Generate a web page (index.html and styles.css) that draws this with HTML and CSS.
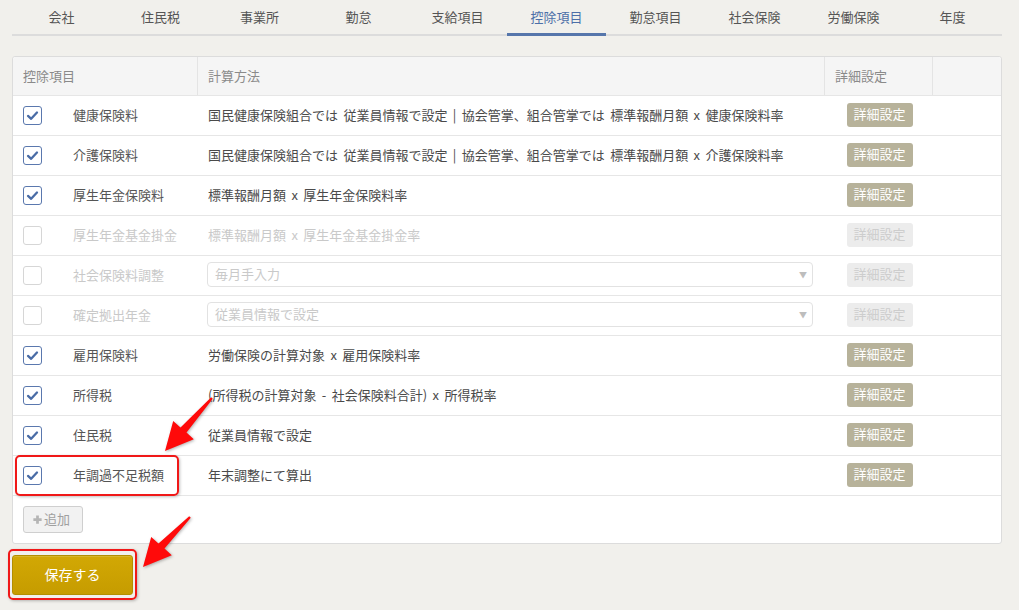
FILE: index.html
```html
<!DOCTYPE html>
<html lang="ja">
<head>
<meta charset="utf-8">
<title>控除項目</title>
<link rel="stylesheet" href="styles.css">
</head>
<body>
<div class="page">
  <nav class="tabs">
    <div class="tab">会社</div>
    <div class="tab">住民税</div>
    <div class="tab">事業所</div>
    <div class="tab">勤怠</div>
    <div class="tab">支給項目</div>
    <div class="tab active">控除項目</div>
    <div class="tab">勤怠項目</div>
    <div class="tab">社会保険</div>
    <div class="tab">労働保険</div>
    <div class="tab">年度</div>
  </nav>

  <div class="panel">
    <div class="row head">
      <div class="cell c1"><span class="txt">控除項目</span></div>
      <div class="cell c2"><span class="txt">計算方法</span></div>
      <div class="cell c3"><span class="txt">詳細設定</span></div>
      <div class="cell c4"></div>
    </div>

    <div class="row">
      <div class="cell c1"><span class="cb on"><svg viewBox="0 0 19 19"><path d="M4.5 10 L8 13.2 L14.5 6.2"/></svg></span><span class="label">健康保険料</span></div>
      <div class="cell c2"><span class="txt">国民健康保険組合では 従業員情報で設定 | 協会管掌、組合管掌では 標準報酬月額 x 健康保険料率</span></div>
      <div class="cell c3"><span class="btn">詳細設定</span></div>
      <div class="cell c4"></div>
    </div>
    <div class="row">
      <div class="cell c1"><span class="cb on"><svg viewBox="0 0 19 19"><path d="M4.5 10 L8 13.2 L14.5 6.2"/></svg></span><span class="label">介護保険料</span></div>
      <div class="cell c2"><span class="txt">国民健康保険組合では 従業員情報で設定 | 協会管掌、組合管掌では 標準報酬月額 x 介護保険料率</span></div>
      <div class="cell c3"><span class="btn">詳細設定</span></div>
      <div class="cell c4"></div>
    </div>
    <div class="row">
      <div class="cell c1"><span class="cb on"><svg viewBox="0 0 19 19"><path d="M4.5 10 L8 13.2 L14.5 6.2"/></svg></span><span class="label">厚生年金保険料</span></div>
      <div class="cell c2"><span class="txt">標準報酬月額 x 厚生年金保険料率</span></div>
      <div class="cell c3"><span class="btn">詳細設定</span></div>
      <div class="cell c4"></div>
    </div>
    <div class="row off">
      <div class="cell c1"><span class="cb"></span><span class="label">厚生年金基金掛金</span></div>
      <div class="cell c2"><span class="txt">標準報酬月額 x 厚生年金基金掛金率</span></div>
      <div class="cell c3"><span class="btn">詳細設定</span></div>
      <div class="cell c4"></div>
    </div>
    <div class="row off">
      <div class="cell c1"><span class="cb"></span><span class="label">社会保険料調整</span></div>
      <div class="cell c2 sel-cell"><div class="select"><span class="txt">毎月手入力</span><span class="caret">▼</span></div></div>
      <div class="cell c3"><span class="btn">詳細設定</span></div>
      <div class="cell c4"></div>
    </div>
    <div class="row off">
      <div class="cell c1"><span class="cb"></span><span class="label">確定拠出年金</span></div>
      <div class="cell c2 sel-cell"><div class="select"><span class="txt">従業員情報で設定</span><span class="caret">▼</span></div></div>
      <div class="cell c3"><span class="btn">詳細設定</span></div>
      <div class="cell c4"></div>
    </div>
    <div class="row">
      <div class="cell c1"><span class="cb on"><svg viewBox="0 0 19 19"><path d="M4.5 10 L8 13.2 L14.5 6.2"/></svg></span><span class="label">雇用保険料</span></div>
      <div class="cell c2"><span class="txt">労働保険の計算対象 x 雇用保険料率</span></div>
      <div class="cell c3"><span class="btn">詳細設定</span></div>
      <div class="cell c4"></div>
    </div>
    <div class="row">
      <div class="cell c1"><span class="cb on"><svg viewBox="0 0 19 19"><path d="M4.5 10 L8 13.2 L14.5 6.2"/></svg></span><span class="label">所得税</span></div>
      <div class="cell c2"><span class="txt">(所得税の計算対象 - 社会保険料合計) x 所得税率</span></div>
      <div class="cell c3"><span class="btn">詳細設定</span></div>
      <div class="cell c4"></div>
    </div>
    <div class="row">
      <div class="cell c1"><span class="cb on"><svg viewBox="0 0 19 19"><path d="M4.5 10 L8 13.2 L14.5 6.2"/></svg></span><span class="label">住民税</span></div>
      <div class="cell c2"><span class="txt">従業員情報で設定</span></div>
      <div class="cell c3"><span class="btn">詳細設定</span></div>
      <div class="cell c4"></div>
    </div>
    <div class="row">
      <div class="cell c1"><span class="cb on"><svg viewBox="0 0 19 19"><path d="M4.5 10 L8 13.2 L14.5 6.2"/></svg></span><span class="label">年調過不足税額</span></div>
      <div class="cell c2"><span class="txt">年末調整にて算出</span></div>
      <div class="cell c3"><span class="btn">詳細設定</span></div>
      <div class="cell c4"></div>
    </div>

    <div class="add-row">
      <span class="add-btn"><svg viewBox="0 0 12 12"><path d="M6 1.5 V10.5 M1.5 6 H10.5"/></svg>追加</span>
    </div>
  </div>

  <div class="actions">
    <span class="save">保存する</span>
  </div>

  <div class="mark mark-row"></div>
  <div class="mark mark-save"></div>
  <svg class="arrows" viewBox="0 0 1019 610" width="1019" height="610">
    <polygon points="212.8,398.7 186.5,432.6 193.8,439.2 165,451 173.2,420.9 180.5,427.4 211.2,397.3"/>
    <polygon points="190.8,517.7 164.5,548.6 171.8,555.2 143,567 151.2,536.9 158.5,543.4 189.2,516.3"/>
  </svg>
</div>
</body>
</html>
```

FILE: styles.css
```css
* { box-sizing: border-box; }
html, body { margin: 0; padding: 0; }
body {
  background: #f1f0ec;
  font-family: "Noto Sans CJK JP", "Noto Sans", "Liberation Sans", sans-serif;
  font-size: 13px;
  color: #4a4a4a;
}
.page {
  position: relative;
  width: 1019px;
  height: 610px;
  padding: 0 17px 0 12px;
  overflow: hidden;
}
.tabs {
  display: flex;
  border-bottom: 2px solid #dcdcdc;
  height: 36px;
}
.tab {
  width: 99px;
  height: 36px;
  margin-bottom: -2px;
  padding-top: 2px;
  line-height: 29px;
  text-align: center;
  color: #555;
  border-bottom: 3px solid transparent;
}
.tab.active {
  color: #4d6fa8;
  border-bottom-color: #5676ab;
}
.panel {
  margin-top: 20px;
  background: #fff;
  border: 1px solid #dcdcdc;
  border-radius: 3px;
}
.row {
  display: grid;
  grid-template-columns: 185px 627px 108px 1fr;
  height: 40px;
  border-bottom: 1px solid #e6e6e6;
}
.row.head {
  height: 39px;
  background: #f5f5f5;
  color: #8a8a8a;
  border-radius: 3px 3px 0 0;
}
.row.head .cell { border-right: 1px solid #e4e4e4; }
.row.head .cell.c4 { border-right: none; }
.cell {
  display: flex;
  align-items: center;
  padding-left: 10px;
  white-space: nowrap;
}
.txt, .label { padding-bottom: 2px; }
.c2 .txt { word-spacing: 2.5px; }
.row .c3 { justify-content: center; padding-left: 0; }
.row.head .c3 { justify-content: flex-start; padding-left: 10px; }
.cb {
  width: 19px;
  height: 19px;
  border: 1px solid #d6d6d6;
  border-radius: 3px;
  background: #fff;
  flex: none;
  display: flex;
  margin-top: -1px;
}
.cb.on { border-color: #5a78ae; }
.cb svg { width: 17px; height: 17px; }
.cb svg path {
  fill: none;
  stroke: #4a6ca6;
  stroke-width: 2.6;
  stroke-linecap: round;
  stroke-linejoin: round;
}
.label { margin-left: 31px; color: #555; }
.row.off .label, .row.off .c2 { color: #c9c9c9; }
.btn {
  display: inline-block;
  width: 66px;
  height: 24px;
  line-height: 22px;
  text-align: center;
  background: #b7b29a;
  color: #fff;
  border-radius: 3px;
  margin-left: 1px;
  margin-top: -2px;
}
.row.off .btn { background: #ececec; color: #cdcdcd; }
.sel-cell { padding-left: 9px; padding-right: 10px; }
.select {
  display: flex;
  justify-content: space-between;
  align-items: center;
  width: 606px;
  height: 25px;
  margin-top: -2px;
  border: 1px solid #e2e2e2;
  border-radius: 4px;
  padding: 0 5px 0 7px;
  color: #c9c9c9;
}
.caret { font-size: 8px; color: #bdbdbd; }
.add-row {
  padding: 10px 10px 10px 10px;
  height: 47px;
}
.add-btn {
  display: inline-flex;
  align-items: center;
  height: 27px;
  width: 60px;
  padding-left: 8px;
  padding-bottom: 2px;
  background: #f2f2f2;
  border: 1px solid #cfcfcf;
  border-radius: 3px;
  color: #a0a0a0;
}
.add-btn svg { width: 11px; height: 11px; margin-right: 1px; margin-top: 2px; }
.add-btn svg path { stroke: #b5b5b5; stroke-width: 3; fill: none; }
.actions { margin-top: 11px; }
.save {
  display: inline-block;
  width: 121px;
  height: 40px;
  line-height: 36px;
  text-align: center;
  color: #fff;
  font-size: 14px;
  background: linear-gradient(#d2a804, #c69c00);
  border: 1px solid #b38e00;
  border-radius: 3px;
  box-shadow: inset 0 1px 0 rgba(255,255,255,0.15);
}
.mark {
  position: absolute;
  border: 2px solid #f01818;
  border-radius: 5px;
  box-shadow: 1px 1px 3px rgba(0,0,0,0.25);
}
.mark-row { left: 15px; top: 455px; width: 164px; height: 41px; }
.mark-save { left: 8px; top: 549px; width: 129px; height: 51px; }
.arrows {
  position: absolute;
  left: 0;
  top: 0;
  pointer-events: none;
}
.arrows polygon {
  fill: #ff0a0a;
  filter: drop-shadow(1px 1px 1.5px rgba(0,0,0,0.3));
}
```
